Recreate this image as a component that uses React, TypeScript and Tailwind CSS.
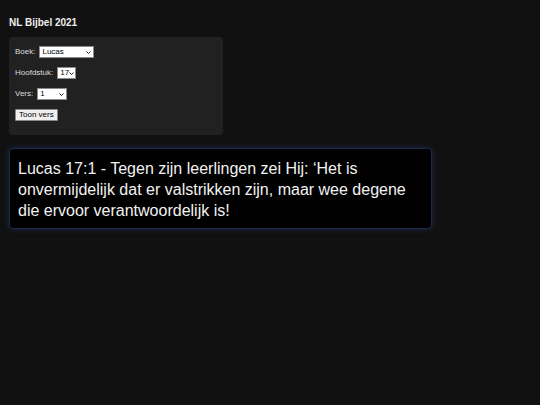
import React from "react";

function Sel({ w, value, pr }: { w: string; value: string; pr?: string }) {
  return (
    <div className={`relative flex h-[12px] items-center border border-[#8a8a8a] bg-white text-[8px] leading-[10px] text-black ${w}`}>
      <span className="pl-[2px]">{value}</span>
      <svg className={`absolute top-[4px] ${pr ?? "right-[2px]"}`} width="5" height="3" viewBox="0 0 5 3">
        <path d="M0.5 0.5 L2.5 2.5 L4.5 0.5" fill="none" stroke="#222" strokeWidth="1" />
      </svg>
    </div>
  );
}

export default function App() {
  return (
    <div className="min-h-[405px] w-[540px] bg-[#111111] px-[9px] pt-[16px] text-[#e6e6e6]" style={{ fontFamily: '"Liberation Sans", Arial, sans-serif' }}>
      <h1 className="text-[10px] font-bold leading-[14px] text-[#eeeeee]">NL Bijbel 2021</h1>
      <div className="mt-[7px] flex h-[98px] w-[214px] flex-col gap-[9px] rounded-[4px] bg-[#212121] px-[6px] pt-[9px] text-[8px] text-[#dddddd]">
        <div className="flex h-[12px] items-center gap-[4px]">
          <span>Boek:</span>
          <Sel w="w-[55px]" value="Lucas" />
        </div>
        <div className="flex h-[12px] items-center gap-[4px]">
          <span>Hoofdstuk:</span>
          <Sel w="w-[19px]" value="17" pr="right-[1px]" />
        </div>
        <div className="flex h-[12px] items-center gap-[4px]">
          <span>Vers:</span>
          <Sel w="w-[30px]" value="1" />
        </div>
        <div className="flex h-[12px] items-center">
          <button className="h-[12px] rounded-[1px] border border-[#8a8a8a] bg-[#efefef] px-[3px] text-[8px] leading-[10px] text-black">Toon vers</button>
        </div>
      </div>
      <div className="mt-[13px] h-[81px] w-[423px] rounded-[4px] border border-[#1c2a4a] bg-black px-[8px] pt-[9px] text-[16px] leading-[21px] text-[#f2f2f2] shadow-[0_0_6px_rgba(40,60,120,0.5)]">
        Lucas 17:1 - Tegen zijn leerlingen zei Hij: ‘Het is onvermijdelijk dat er valstrikken zijn, maar wee degene die ervoor verantwoordelijk is!
      </div>
    </div>
  );
}
